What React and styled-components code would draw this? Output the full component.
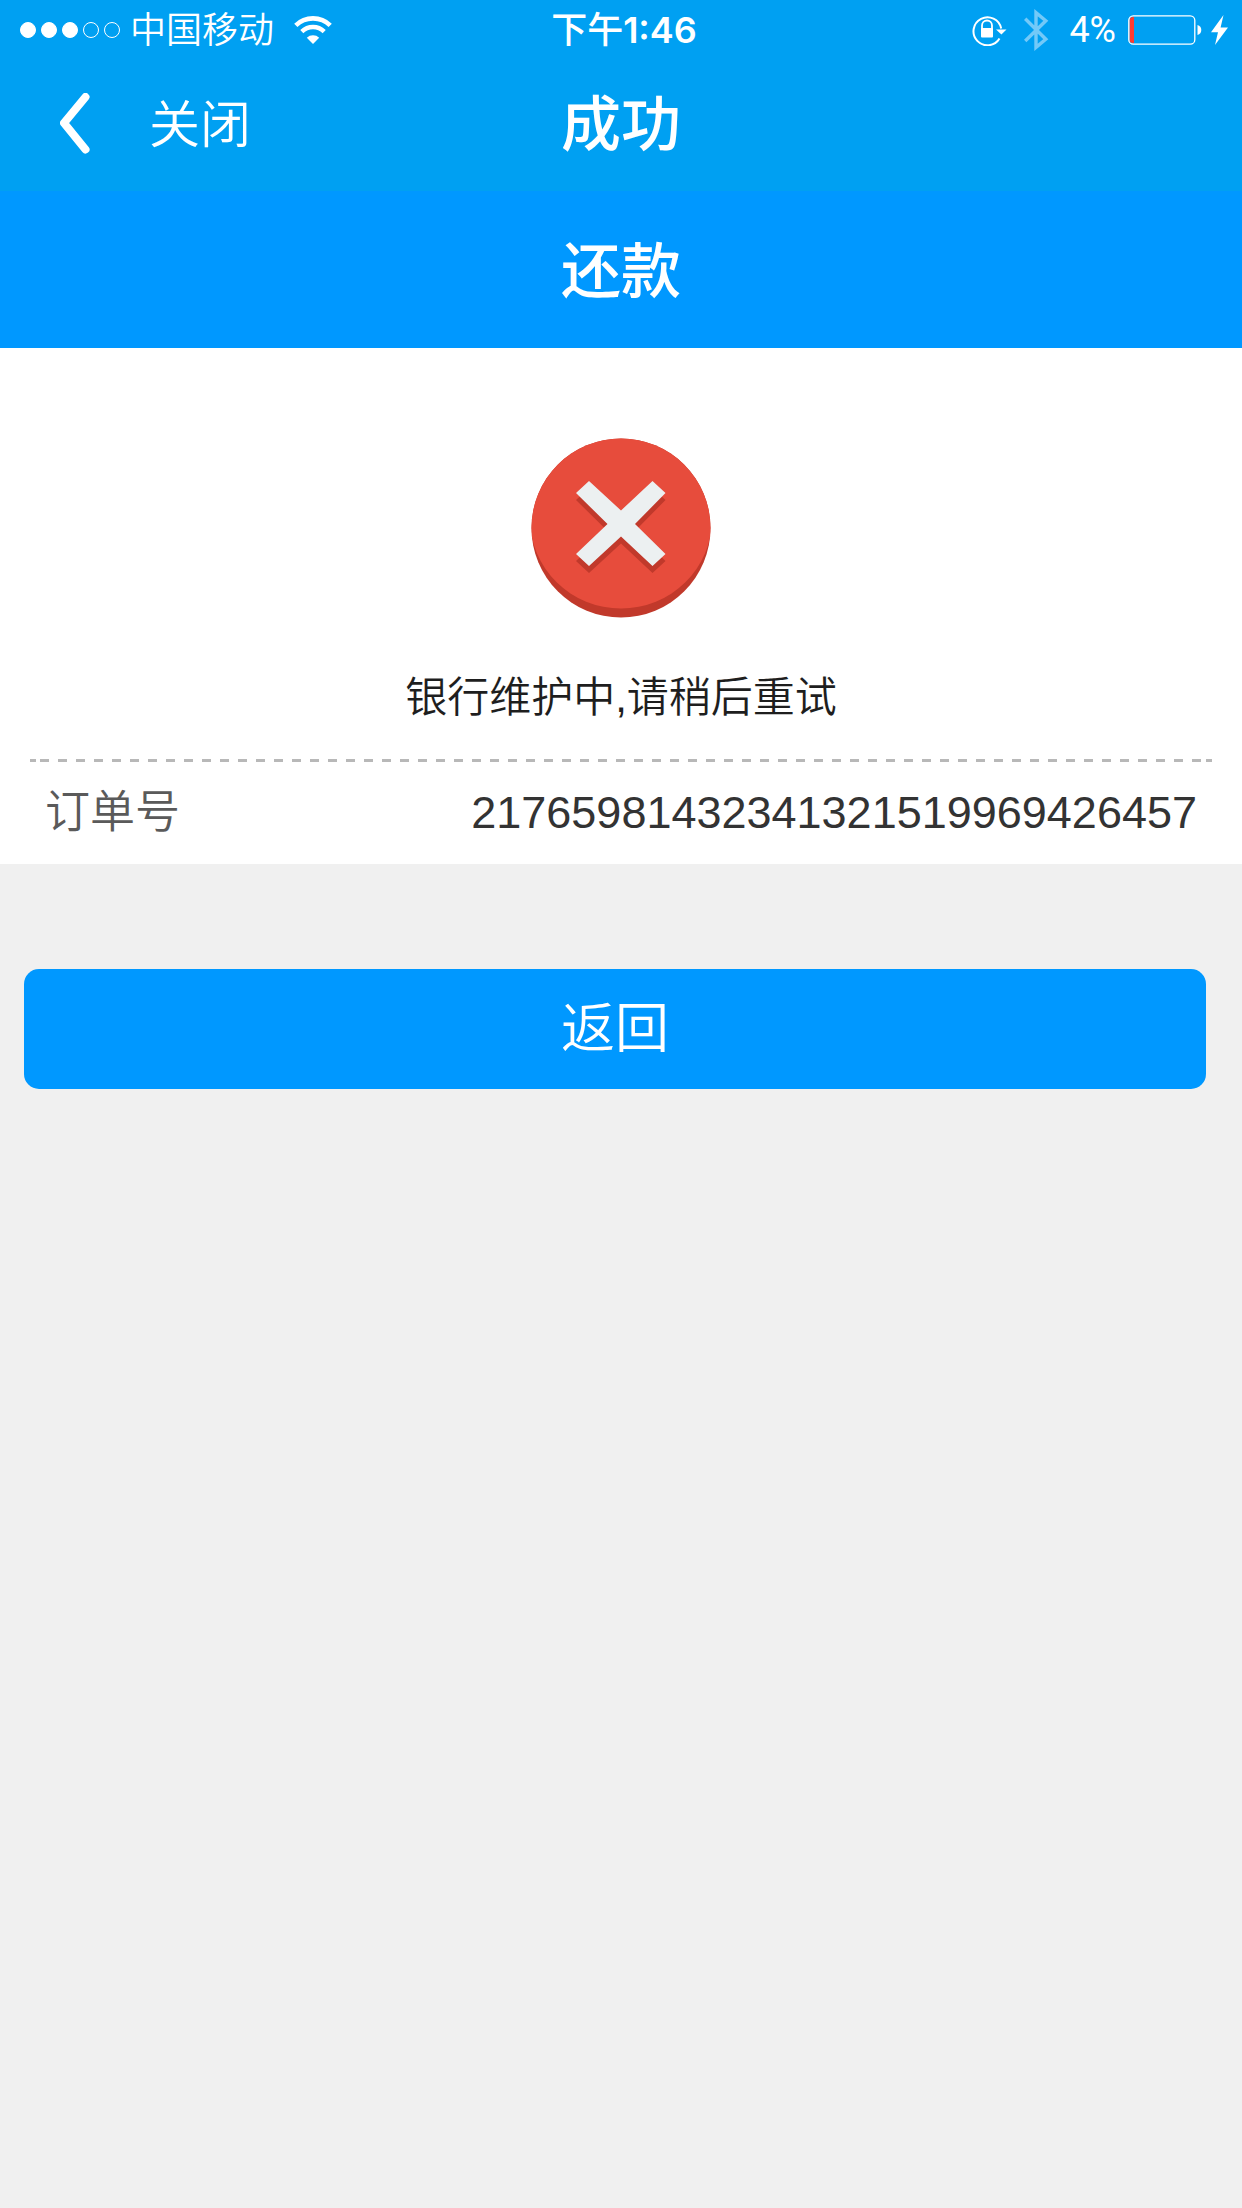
import React from "react";
import styled, { createGlobalStyle } from "styled-components";

const GlobalStyle = createGlobalStyle`
  * {
    box-sizing: border-box;
  }
  body {
    margin: 0;
    background: #f0f0f0;
    font-family: "Liberation Sans", "Noto Sans CJK SC", sans-serif;
    font-weight: 350;
  }
  svg {
    display: block;
  }
`;

const Header = styled.header`
  background: #00a0f2;
  color: #fff;
`;

const StatusBar = styled.div`
  display: grid;
  grid-template-columns: 1fr auto 1fr;
  align-items: center;
  height: 60px;
  padding: 0 14px 0 20px;
  font-family: Inter, "Noto Sans CJK SC", sans-serif;
  font-size: 36px;
  line-height: 60px;
`;

const StatusGroup = styled.div`
  display: flex;
  align-items: center;
  justify-content: ${props => (props.$end ? "flex-end" : "flex-start")};
`;

const Signal = styled.div`
  display: flex;
  gap: 5px;
  margin-right: 10px;
`;

const Dot = styled.span`
  width: 16px;
  height: 16px;
  border: 1px solid #fff;
  border-radius: 50%;
  background: ${props => (props.$filled ? "#fff" : "transparent")};
`;

const Carrier = styled.span`
  margin-right: 20px;
`;

const Time = styled.time`
  font-weight: 500;
`;

const Digits = styled.span`
  font-weight: 600;
`;

const Percent = styled.span`
  margin: 0 12px 0 20px;
  font-family: Roboto, sans-serif;
  font-weight: 400;
`;

const NavBar = styled.nav`
  display: grid;
  grid-template-columns: 1fr auto 1fr;
  align-items: center;
  height: 131px;
  padding: 0 60px;
`;

const NavActions = styled.div`
  display: flex;
  align-items: center;
  gap: 59px;
`;

const NavButton = styled.button`
  border: 0;
  padding: 0;
  background: none;
  color: inherit;
  font-family: inherit;
  font-size: 51px;
  font-weight: inherit;
  line-height: 60px;
  cursor: pointer;
`;

const Title = styled.h1`
  margin: 0;
  font-size: 60px;
  font-weight: 500;
  line-height: 90px;
`;

const PageBar = styled.div`
  display: flex;
  align-items: center;
  justify-content: center;
  height: 157px;
  padding-top: 6px;
  background: #0098ff;
  color: #fff;
`;

const Panel = styled.section`
  display: flex;
  flex-direction: column;
  padding: 90px 30px 0;
  background: #fff;
`;

const Message = styled.p`
  margin: 50px 0 31px;
  color: #1e1e1e;
  font-size: 42px;
  line-height: 60px;
  text-align: center;
`;

const Divider = styled.hr`
  width: 100%;
  height: 3px;
  margin: 0;
  border: 0;
  padding: 0 10px;
  background: linear-gradient(#b8b8b8, #b8b8b8) left / 6px 3px no-repeat
      border-box,
    linear-gradient(#b8b8b8, #b8b8b8) right / 6px 3px no-repeat border-box,
    linear-gradient(90deg, #b8b8b8 9px, transparent 9px) left / 18px 3px
      repeat-x content-box;
`;

const Order = styled.dl`
  display: flex;
  align-items: center;
  justify-content: space-between;
  height: 102px;
  margin: 0;
  padding: 0 15px;
  font-size: 45px;
  line-height: 60px;
`;

const OrderLabel = styled.dt`
  color: #5a5a5a;
`;

const OrderNumber = styled.dd`
  margin: 0;
  color: #333;
`;

const Actions = styled.div`
  padding: 105px 36px 105px 24px;
`;

const BackButton = styled.button`
  display: block;
  width: 100%;
  height: 120px;
  border: 0;
  border-radius: 15px;
  padding: 0;
  background: #0098ff;
  color: #fff;
  font-family: inherit;
  font-size: 54px;
  font-weight: inherit;
  line-height: 60px;
  cursor: pointer;
`;

const ErrorSvg = styled.svg`
  align-self: center;
`;

const BluetoothSvg = styled.svg`
  margin-left: 17px;
`;

const BoltSvg = styled.svg`
  margin-left: 9px;
`;

const WifiIcon = () => (
  <svg width="38" height="28" viewBox="0 0 38 28" fill="none">
    <path d="M1.8 9.4a24.5 24.5 0 0 1 34.4 0" stroke="#fff" strokeWidth="4.6" />
    <path d="M7.8 15.6a16 16 0 0 1 22.4 0" stroke="#fff" strokeWidth="4.4" />
    <path d="M19 28l-6.2-6.2a9 9 0 0 1 12.4 0z" fill="#fff" />
  </svg>
);

const LockIcon = () => (
  <svg width="35" height="32" viewBox="0 0 35 32" fill="none">
    <path
      d="M27.5 24.5A14 14 0 1 1 29.2 14.5"
      stroke="#fff"
      strokeWidth="2"
    />
    <path d="M24 15.5h10.5L29.4 20.5z" fill="#fff" />
    <path d="M10 15v-3.5a5 5 0 0 1 10 0V15" stroke="#fff" strokeWidth="1.8" />
    <rect x="9" y="14" width="12" height="9.5" rx="1" fill="#fff" />
  </svg>
);

const BluetoothIcon = () => (
  <BluetoothSvg width="25" height="42" viewBox="0 0 25 42" fill="none">
    <path
      d="M1.2 9.8l20.6 20.4L12 38.4V3.6l9.8 8.2L1.2 32"
      stroke="#73c9f8"
      strokeWidth="3.4"
    />
  </BluetoothSvg>
);

const BatteryIcon = () => (
  <svg width="74" height="30" viewBox="0 0 74 30" fill="none">
    <path
      d="M5 2H6v26H5A3.5 3.5 0 0 1 1.5 24.5V5.5A3.5 3.5 0 0 1 5 2z"
      fill="#ff3b30"
    />
    <rect
      x="0.8"
      y="0.8"
      width="66"
      height="28.4"
      rx="4.5"
      stroke="#fff"
      strokeWidth="1.3"
    />
    <path d="M69.5 10c2.4.6 3.8 2.6 3.8 5s-1.4 4.4-3.8 5z" fill="#fff" />
  </svg>
);

const BoltIcon = () => (
  <BoltSvg width="17" height="30" viewBox="0 0 17 30">
    <path d="M12.5 0L0 17.2h7L4 30l13-17.6H9.6z" fill="#fff" />
  </BoltSvg>
);

const ChevronIcon = () => (
  <svg width="30" height="66" viewBox="0 0 30 66" fill="none">
    <path
      d="M25.5 4L4 30l21.5 26.5"
      stroke="#fff"
      strokeWidth="8"
      strokeLinecap="round"
      strokeLinejoin="round"
    />
  </svg>
);

const ErrorIcon = () => (
  <ErrorSvg width="180" height="180" viewBox="0 0 180 180">
    <defs>
      <clipPath id="disc">
        <circle cx="90" cy="90" r="89.5" />
      </clipPath>
      <path
        id="cross"
        d="M58 43L90 72.5 121.5 43 134.5 55 104 86 134.5 116 121.5 128 90 98.5 58 128 45 116 76.5 86 45 55z"
      />
    </defs>
    <g clipPath="url(#disc)">
      <rect width="180" height="180" fill="#c1392b" />
      <ellipse cx="90" cy="81" rx="91" ry="89.5" fill="#e74c3c" />
    </g>
    <use href="#cross" y="7" fill="#c1392b" />
    <use href="#cross" fill="#ecf0f1" />
  </ErrorSvg>
);

const signal = [true, true, true, false, false];

const App = () => {
  return (
    <>
      <GlobalStyle />
      <Header>
        <StatusBar>
          <StatusGroup>
            <Signal>
              {signal.map((filled, i) => (
                <Dot key={i} $filled={filled} />
              ))}
            </Signal>
            <Carrier>中国移动</Carrier>
            <WifiIcon />
          </StatusGroup>
          <Time>
            下午<Digits>1:46</Digits>
          </Time>
          <StatusGroup $end>
            <LockIcon />
            <BluetoothIcon />
            <Percent>4%</Percent>
            <BatteryIcon />
            <BoltIcon />
          </StatusGroup>
        </StatusBar>
        <NavBar>
          <NavActions>
            <NavButton aria-label="返回">
              <ChevronIcon />
            </NavButton>
            <NavButton>关闭</NavButton>
          </NavActions>
          <Title>成功</Title>
        </NavBar>
      </Header>
      <PageBar>
        <Title as="h2">还款</Title>
      </PageBar>
      <main>
        <Panel>
          <ErrorIcon />
          <Message>银行维护中,请稍后重试</Message>
          <Divider />
          <Order>
            <OrderLabel>订单号</OrderLabel>
            <OrderNumber>21765981432341321519969426457</OrderNumber>
          </Order>
        </Panel>
        <Actions>
          <BackButton>返回</BackButton>
        </Actions>
      </main>
    </>
  );
};

export default App;
